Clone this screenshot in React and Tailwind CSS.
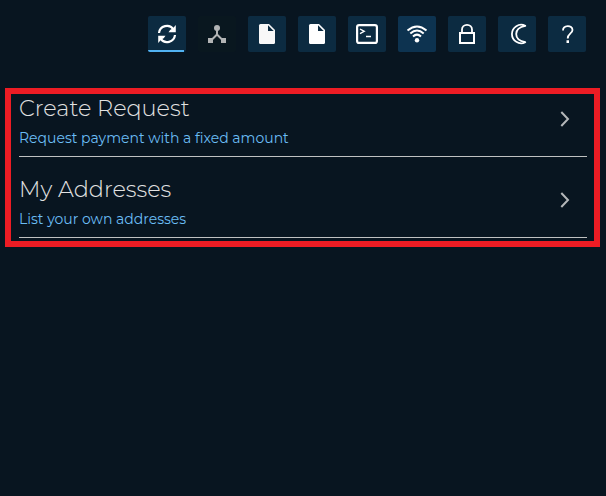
function IconButton({ children, className = "bg-[#0c2b41]", label }) {
  return (
    <button aria-label={label} className={`h-9 w-[38px] shrink-0 overflow-hidden rounded-[2px] ${className}`}>
      <svg width="38" height="36" viewBox="0 0 38 36" fill="none" stroke="#fff" strokeWidth="2">
        {children}
      </svg>
    </button>
  );
}

function FileIcon({ fill }) {
  return (
    <>
      <path d="M12.500 8H21L27 14V26.500Q27 28 25.500 28H12.500Q11 28 11 26.500V9.500Q11 8 12.500 8Z" fill={fill} stroke="none" />
      <path d="M20 9.300V15H25.700Z" fill="#0c2b41" stroke="none" />
    </>
  );
}

function Row({ title, subtitle }) {
  return (
    <div className="flex h-[81px] items-start justify-between border-b border-[#bfc1c1] pt-4 pr-[17px]">
      <div>
        <div className="h-8 text-[22.4px] leading-8 font-light whitespace-nowrap text-[#e2e2e2]">{title}</div>
        <div className="mt-1 h-5 text-[14px] leading-5 whitespace-nowrap text-[#6bbdf5]">{subtitle}</div>
      </div>
      <svg className="mt-[19px]" width="10" height="16" viewBox="0 0 10 16" fill="none" stroke="#b4b7b9" strokeWidth="2">
        <path d="M1.300 1L8 8L1.300 15" />
      </svg>
    </div>
  );
}

export default function App() {
  return (
    <div className="h-[496px] w-[606px] overflow-hidden bg-[#081520] font-['Montserrat','Inter',sans-serif]">
      <header className="flex h-[88px] items-start justify-end gap-3 pt-4 pr-5">
        <IconButton label="Refresh">
          <path d="M11 17A8 8 0 0 1 25.500 13.300M27 19A8 8 0 0 1 12.500 22.700" strokeWidth="2.200" />
          <path d="M27.800 9V16.300H20.500L22.300 13.800L24.800 12.500ZM10.200 27V19.700H17.500L15.700 22.200L13.200 23.500Z" fill="#fff" stroke="none" />
          <path d="M0 34H36V36H0Z" fill="#51b2f2" stroke="none" />
        </IconButton>
        <IconButton label="Network" className="bg-[#09171f]">
          <path d="M19 12V18.500L12.500 25M19 18.500L25.500 25" stroke="#b2b4b5" />
          <circle cx="19" cy="12" r="3" fill="#b2b4b5" stroke="none" />
          <path d="M10 22H15V27H10ZM23 22H28V27H23Z" fill="#b2b4b5" stroke="none" />
        </IconButton>
        <IconButton label="Document"><FileIcon fill="#f8f8f8" /></IconButton>
        <IconButton label="Document"><FileIcon fill="#ffffff" /></IconButton>
        <IconButton label="Console">
          <rect x="9.100" y="9.100" width="19.800" height="17.800" rx="2" strokeWidth="2.200" />
          <path d="M12 13L16.200 15.300L12 17.600M18 20.500H23" strokeWidth="1.400" />
        </IconButton>
        <IconButton label="Connection" className="bg-[#0d3350]">
          <path d="M9.500 14.500Q19 6.500 28.500 14.500M12.300 17.500Q19 11.500 25.700 17.500M15 20.500Q19 16.800 23 20.500" />
          <circle cx="19" cy="24.200" r="2.200" fill="#fff" stroke="none" />
        </IconButton>
        <IconButton label="Lock">
          <rect x="12" y="17" width="14" height="10" />
          <path d="M14 17V13.500A5 4.700 0 0 1 24 13.500V17" strokeWidth="1.800" />
        </IconButton>
        <IconButton label="Theme">
          <path d="M27.300 9.800A9.200 9.200 0 1 0 27.300 26.200Q18.200 24.500 18.200 18Q18.200 11.500 27.300 9.800Z" strokeWidth="1.800" strokeLinejoin="round" />
        </IconButton>
        <IconButton label="Help">
          <path d="M15 14.500C15 8.700 24.500 8.700 24.500 14C24.500 17.500 19.700 17.500 19.700 22.500" strokeWidth="1.800" />
          <path d="M18.500 24.300H21V27H18.500Z" fill="#fff" stroke="none" />
        </IconButton>
      </header>
      <main className="ml-[5px] h-[159px] w-[595px] border-[6px] border-[#ed1c24] pr-[7px] pl-2">
        <div className="-mt-[18px]">
          <Row title="Create Request" subtitle="Request payment with a fixed amount" />
          <Row title="My Addresses" subtitle="List your own addresses" />
        </div>
      </main>
    </div>
  );
}
